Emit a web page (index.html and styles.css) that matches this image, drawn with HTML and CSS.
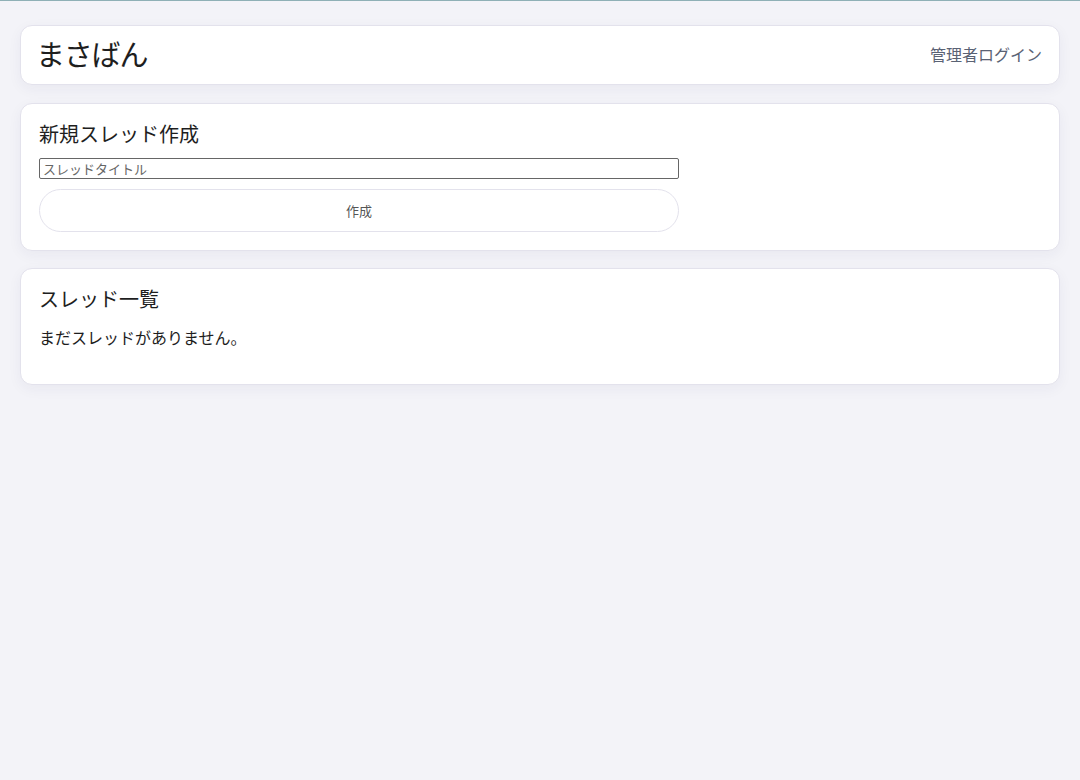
FILE: index.html
```html
<!DOCTYPE html>
<html lang="ja">
<head>
    <meta charset="UTF-8" />
    <meta name="viewport" content="width=device-width, initial-scale=1.0"/>
    <title>まさばん</title>
    <link rel="stylesheet" href="styles.css">
</head>
<body>
    <!-- Site header -->
    <header class="card site-header">
        <h1 class="site-title">まさばん</h1>
        <a href="admin.html" class="admin-link">管理者ログイン</a>
    </header>

    <!-- New thread form -->
    <section class="card">
        <h2>新規スレッド作成</h2>
        <form class="thread-form">
            <input type="text" name="title" placeholder="スレッドタイトル" />
            <button type="submit">作成</button>
        </form>
    </section>

    <!-- Thread list -->
    <section class="card">
        <h2>スレッド一覧</h2>
        <p class="empty">まだスレッドがありません。</p>
    </section>
</body>
</html>
```

FILE: styles.css
```css
* {
    box-sizing: border-box;
    margin: 0;
    padding: 0;
}

body {
    font-family: "Noto Sans CJK JP", "Noto Sans", sans-serif;
    color: #1e1e1e;
    background: #f3f3f8;
    border-top: 1px solid #8fb0b6;
    padding: 24px 20px;
    min-height: 100vh;
}

/* 
    Cards
*/
.card {
    background: #fff;
    border: 1px solid #e3e2ec;
    border-radius: 12px;
    box-shadow: 0 4px 14px rgba(40, 40, 90, 0.05);
    padding: 18px;
    margin-bottom: 17px;
}

.site-header {
    display: flex;
    align-items: center;
    justify-content: space-between;
    padding: 5px 17px 8px 15px;
    height: 60px;
    margin-bottom: 18px;
}

.site-title {
    font-size: 29px;
    font-weight: normal;
    line-height: 1;
    letter-spacing: -1.2px;
}

.admin-link {
    text-decoration: none;
    color: #5a6274;
    font-size: 16px;
}

h2 {
    font-size: 20px;
    font-weight: normal;
    line-height: 24px;
    margin-bottom: 12px;
}

/* 
    Thread form
*/
.thread-form {
    width: 640px;
    display: flex;
    flex-direction: column;
    gap: 10px;
}

.thread-form input {
    font-family: inherit;
    font-size: 13px;
    line-height: 17px;
    height: 21px;
    padding: 0 3px 1px;
    border: 1px solid #666;
    border-radius: 2px;
    color: #333;
}

.thread-form input::placeholder {
    color: #666;
}

.thread-form button {
    font-family: inherit;
    font-size: 13px;
    height: 43px;
    background: #fff;
    border: 1px solid #e3e2ec;
    border-radius: 22px;
    color: #555;
}

.empty {
    font-size: 16px;
    margin-top: 14px;
    margin-bottom: 17px;
}
```
